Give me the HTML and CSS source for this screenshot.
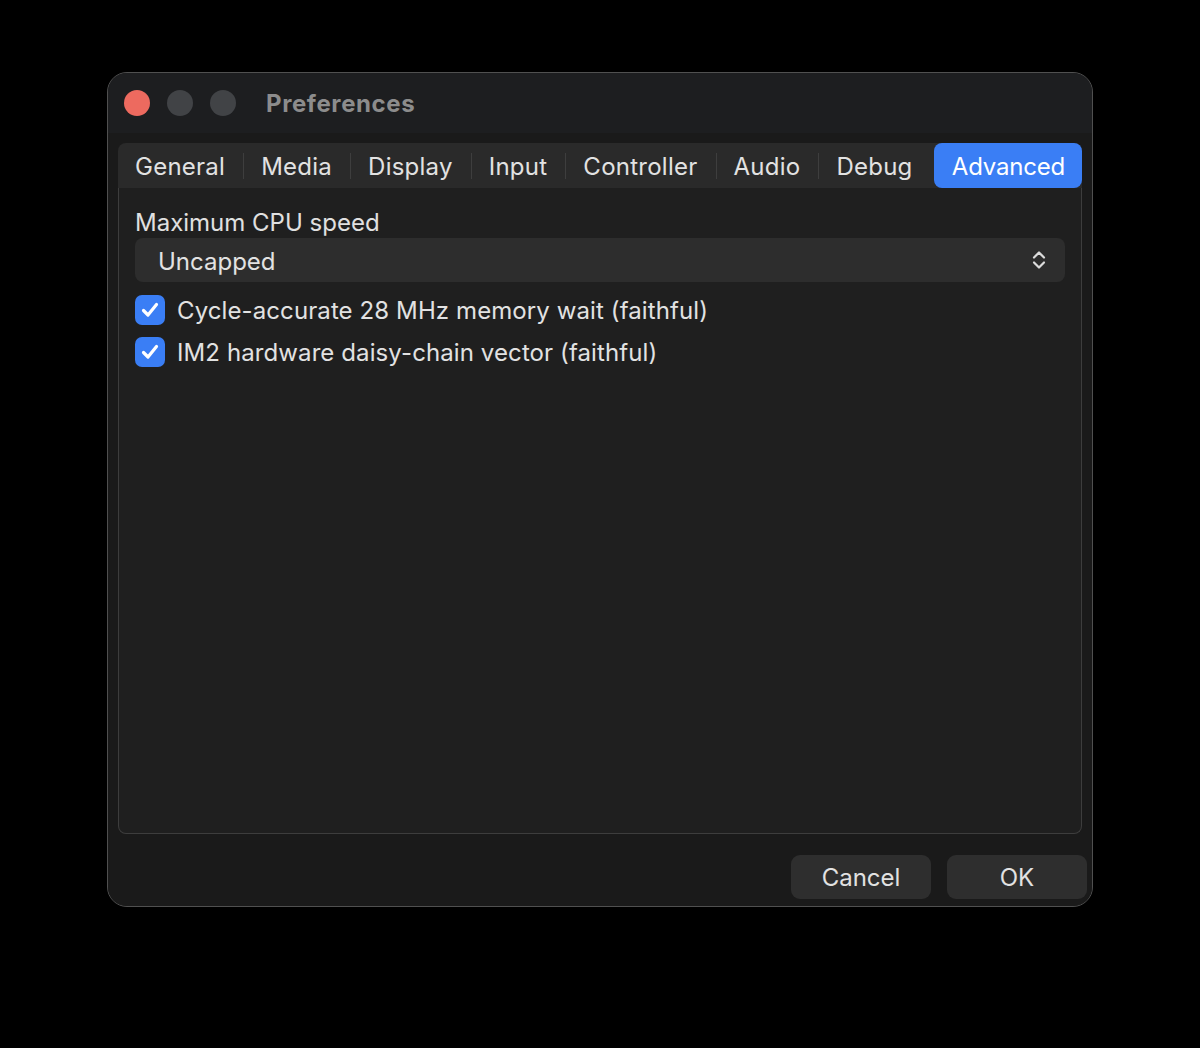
FILE: index.html
```html
<!DOCTYPE html>
<html lang="en">
<head>
<meta charset="utf-8">
<title>Preferences</title>
<link rel="stylesheet" href="styles.css">
</head>
<body>
<div class="desktop">
  <div class="window">
    <div class="titlebar">
      <div class="lights">
        <span class="light close"></span>
        <span class="light"></span>
        <span class="light"></span>
      </div>
      <div class="title">Preferences</div>
    </div>
    <div class="content">
      <div class="tabbar">
        <div class="tab">General</div>
        <div class="tab sep">Media</div>
        <div class="tab sep">Display</div>
        <div class="tab sep">Input</div>
        <div class="tab sep">Controller</div>
        <div class="tab sep">Audio</div>
        <div class="tab sep">Debug</div>
        <div class="tab active">Advanced</div>
      </div>
      <div class="panel">
        <div class="field-label">Maximum CPU speed</div>
        <div class="select">
          <span class="select-value">Uncapped</span>
          <svg class="chevrons" width="14" height="22" viewBox="0 0 14 22">
            <path d="M2 8.5 L7 3.5 L12 8.5" fill="none" stroke="#dcdcdc" stroke-width="2.2" stroke-linecap="round" stroke-linejoin="round"/>
            <path d="M2 13.5 L7 18.5 L12 13.5" fill="none" stroke="#dcdcdc" stroke-width="2.2" stroke-linecap="round" stroke-linejoin="round"/>
          </svg>
        </div>
        <div class="check-row">
          <span class="checkbox">
            <svg width="30" height="30" viewBox="0 0 30 30">
              <path d="M8.5 15.5 L13 20 L21.5 9.5" fill="none" stroke="#fff" stroke-width="3.2" stroke-linecap="round" stroke-linejoin="round"/>
            </svg>
          </span>
          <span class="check-label">Cycle-accurate 28 MHz memory wait (faithful)</span>
        </div>
        <div class="check-row">
          <span class="checkbox">
            <svg width="30" height="30" viewBox="0 0 30 30">
              <path d="M8.5 15.5 L13 20 L21.5 9.5" fill="none" stroke="#fff" stroke-width="3.2" stroke-linecap="round" stroke-linejoin="round"/>
            </svg>
          </span>
          <span class="check-label">IM2 hardware daisy-chain vector (faithful)</span>
        </div>
      </div>
      <div class="footer">
        <div class="button">Cancel</div>
        <div class="button">OK</div>
      </div>
    </div>
  </div>
</div>
</body>
</html>
```
FILE: styles.css
```css
html, body {
  margin: 0;
  padding: 0;
  background: #000;
}

body {
  font-family: Inter, "Liberation Sans", sans-serif;
  color: #e0e0e0;
}

.desktop {
  padding: 72px 0 0 107px;
  height: 1048px;
  box-sizing: border-box;
}

.window {
  width: 986px;
  height: 835px;
  box-sizing: border-box;
  border: 1px solid #505050;
  border-radius: 20px;
  background: #212121;
  overflow: hidden;
  display: flex;
  flex-direction: column;
}

/* title bar with the three window buttons */
.titlebar {
  height: 60px;
  flex: none;
  background: #1d1e20;
  display: flex;
  align-items: center;
  padding-left: 16px;
}

.lights {
  display: flex;
  gap: 17px;
}

.light {
  width: 26px;
  height: 26px;
  border-radius: 50%;
  background: #414346;
}

.light.close {
  background: #ed6a5f;
}

.title {
  margin-left: 30px;
  font-size: 24px;
  font-weight: 700;
  color: #8c8c8c;
  letter-spacing: 0.6px;
}

.content {
  flex: 1;
  display: flex;
  flex-direction: column;
  padding: 10px 0 0 10px;
  background: #1a1a1a;
}

/* tabs */
.tabbar {
  height: 45px;
  flex: none;
  width: 964px;
  background: #2a2a2a;
  border-radius: 8px 8px 0 0;
  display: flex;
  align-items: center;
}

.tab {
  position: relative;
  height: 45px;
  box-sizing: border-box;
  display: flex;
  align-items: center;
  padding: 1px 18px 0 18px;
  font-size: 24px;
  letter-spacing: 0.25px;
  color: #e2e2e2;
}

.tab:first-child {
  padding-left: 17px;
}

.tab.sep::before {
  content: "";
  position: absolute;
  left: 0;
  top: 10px;
  width: 1px;
  height: 26px;
  background: #3e3e3e;
}

.tab.active {
  margin-left: auto;
  background: #3a7ef5;
  color: #fff;
  letter-spacing: -0.2px;
  border-radius: 8px;
  padding: 1px 17px 0 18px;
}

/* settings panel */
.panel {
  width: 964px;
  height: 646px;
  flex: none;
  box-sizing: border-box;
  border: 1px solid #3d3d3d;
  border-top: none;
  border-radius: 0 0 8px 8px;
  background: #1f1f1f;
  padding: 20px 16px 0 16px;
}

.field-label {
  height: 30px;
  line-height: 30px;
  font-size: 24px;
  color: #e0e0e0;
}

.select {
  height: 44px;
  box-sizing: border-box;
  border-radius: 8px;
  background: #2d2d2d;
  display: flex;
  align-items: center;
  padding: 2px 19px 0 23px;
  margin-bottom: 7px;
}

.select-value {
  flex: 1;
  font-size: 24px;
  color: #e2e2e2;
}

.chevrons {
  display: block;
  margin-top: -2px;
}

.check-row {
  height: 42px;
  display: flex;
  align-items: center;
  gap: 12px;
}

.checkbox {
  width: 30px;
  height: 30px;
  border-radius: 7px;
  background: #3a7ef5;
  display: block;
}

.checkbox svg {
  display: block;
}

.check-label {
  font-size: 24px;
  letter-spacing: 0.1px;
  color: #e2e2e2;
}

/* dialog buttons */
.footer {
  display: flex;
  justify-content: flex-end;
  gap: 16px;
  padding: 21px 5px 0 0;
}

.button {
  width: 140px;
  height: 44px;
  border-radius: 9px;
  background: #2e2e2e;
  display: flex;
  align-items: center;
  justify-content: center;
  font-size: 24px;
  color: #e2e2e2;
}
```
